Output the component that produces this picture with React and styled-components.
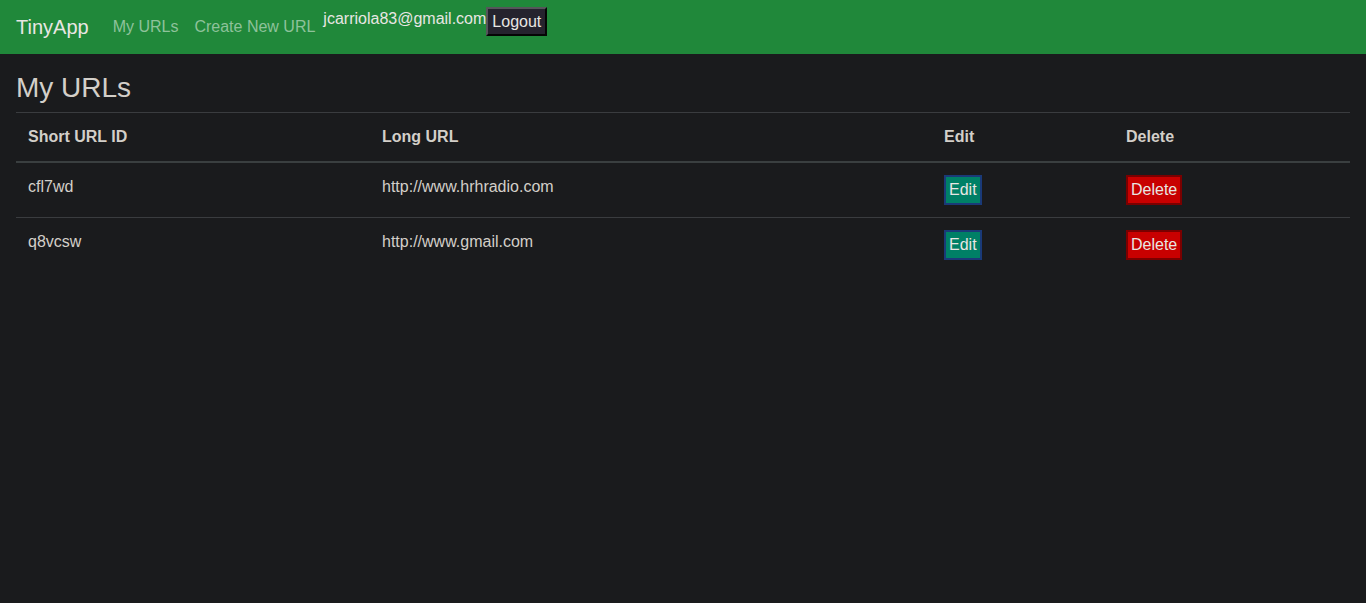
import React from 'react';
import styled, { createGlobalStyle } from 'styled-components';

const Global = createGlobalStyle`
  html, body {
    margin: 0;
    background: #1a1b1d;
    color: #d3cfc9;
    font-family: "Liberation Sans", Arial, sans-serif;
    font-size: 16px;
    line-height: 1.5;
  }
`;

const Navbar = styled.nav`
  display: flex;
  align-items: flex-start;
  height: 54px;
  box-sizing: border-box;
  padding: 0 16px;
  background: #20883a;
`;

const Brand = styled.a`
  font-size: 20px;
  line-height: 30px;
  padding-top: 12px;
  margin-right: 16px;
  color: #e8e6e3;
  text-decoration: none;
`;

const NavLink = styled.a`
  font-size: 16px;
  line-height: 24px;
  padding: 15px 8px 0;
  color: #8ec29a;
  text-decoration: none;
`;

const User = styled.div`
  display: flex;
  align-items: flex-start;
  padding-top: 7px;
  color: #e8e6e3;
`;

const Email = styled.span`
  line-height: 24px;
`;

const LogoutButton = styled.button`
  font-family: "Liberation Sans", Arial, sans-serif;
  font-size: 16px;
  line-height: 21px;
  padding: 2px 4px;
  background: #25232e;
  color: #e8e6e3;
  border: 2px outset #55565a;
`;

const Main = styled.main`
  padding: 17px 16px 0;
`;

const Title = styled.h3`
  margin: 0 0 7px;
  font-size: 28px;
  font-weight: 400;
  line-height: 1.2;
  color: #d3cfc9;
`;

const Table = styled.table`
  width: 100%;
  table-layout: fixed;
  border-collapse: collapse;
`;

const Th = styled.th`
  text-align: left;
  font-weight: 700;
  padding: 12px;
  border-top: 1px solid #3a3c3f;
  border-bottom: 2px solid #3a3f40;
`;

const Td = styled.td`
  padding: 12px;
  vertical-align: top;
  border-top: 1px solid #3a3c3f;
  line-height: 24px;
`;

const ActionButton = styled.button`
  font-family: "Liberation Sans", Arial, sans-serif;
  font-size: 16px;
  line-height: 21px;
  padding: 2px 3px 3px;
  vertical-align: top;
  color: #e8e6e3;
  background: ${p => (p.$danger ? '#c80000' : '#008066')};
  border: 2px solid ${p => (p.$danger ? '#7a0000' : '#1a3a78')};
  border-radius: 0;
`;

const columns = [
  { label: 'Short URL ID', width: 354 },
  { label: 'Long URL', width: 562 },
  { label: 'Edit', width: 182 },
  { label: 'Delete', width: 236 }
];

const urls = [
  { id: 'cfl7wd', long: 'http://www.hrhradio.com' },
  { id: 'q8vcsw', long: 'http://www.gmail.com' }
];

export default function App() {
  return (
    <>
      <Global />
      <Navbar>
        <Brand href="#">TinyApp</Brand>
        <NavLink href="#">My URLs</NavLink>
        <NavLink href="#">Create New URL</NavLink>
        <User>
          <Email>jcarriola83@gmail.com</Email>
          <LogoutButton>Logout</LogoutButton>
        </User>
      </Navbar>
      <Main>
        <Title>My URLs</Title>
        <Table>
          <colgroup>
            {columns.map(c => (
              <col key={c.label} style={{ width: c.width }} />
            ))}
          </colgroup>
          <thead>
            <tr>
              {columns.map(c => (
                <Th key={c.label}>{c.label}</Th>
              ))}
            </tr>
          </thead>
          <tbody>
            {urls.map(u => (
              <tr key={u.id}>
                <Td>{u.id}</Td>
                <Td>{u.long}</Td>
                <Td><ActionButton>Edit</ActionButton></Td>
                <Td><ActionButton $danger>Delete</ActionButton></Td>
              </tr>
            ))}
          </tbody>
        </Table>
      </Main>
    </>
  );
}
